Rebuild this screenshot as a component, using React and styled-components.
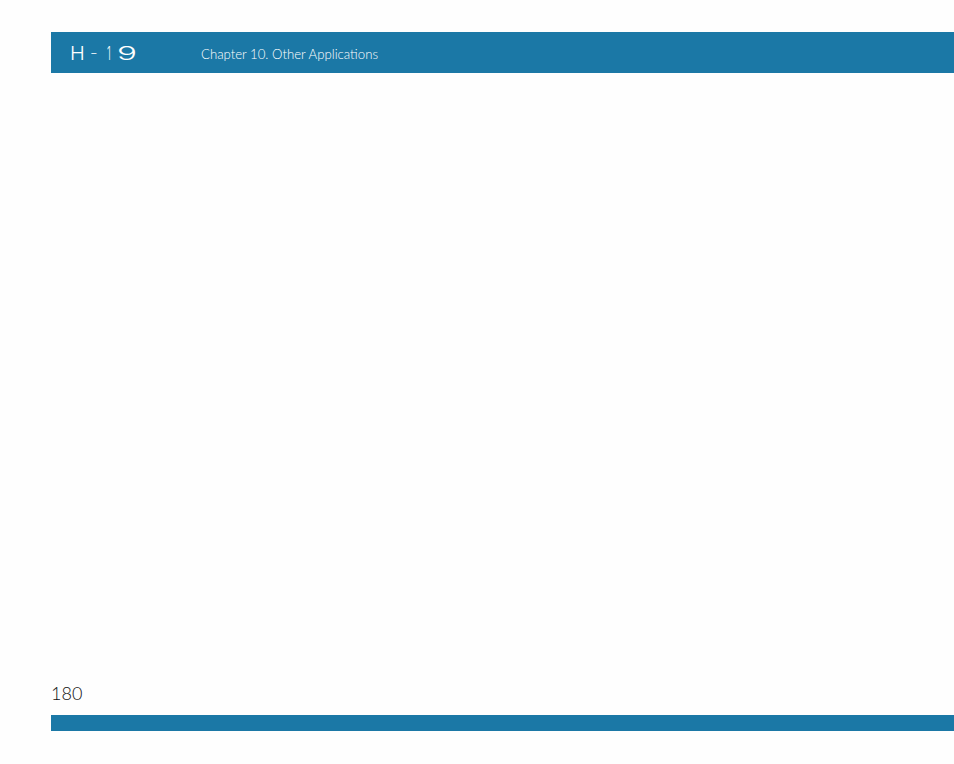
import React from 'react';
import styled, { createGlobalStyle } from 'styled-components';

const Global = createGlobalStyle`
  html, body { margin: 0; padding: 0; background: #fefefe; }
`;

const Sheet = styled.div`
  box-sizing: border-box;
  width: 954px;
  height: 764px;
  padding: 32px 0 33px 51px;
  display: flex;
  flex-direction: column;
  font-family: "Lato", "Liberation Sans", sans-serif;
  font-weight: 300;
  overflow: hidden;
`;

const Header = styled.header`
  height: 41px;
  background: #1b78a6;
  display: flex;
  align-items: center;
  color: #fff;
`;

const Model = styled.div`
  width: 150px;
  padding: 3px 0 0 19px;
  box-sizing: border-box;
  display: flex;
  align-items: center;
  font-family: "Inter", "Liberation Sans", sans-serif;
  font-weight: 300;
  font-size: 19px;
  line-height: 20px;
  white-space: nowrap;
`;

/* wide letterform of the logo: each glyph is stretched on its own */
const Glyph = styled.span`
  display: inline-block;
  width: ${p => p.$width}px;
  transform: translateY(${p => p.$lift || 0}px) scaleX(${p => p.$scale});
  transform-origin: 0 50%;
  font-size: ${p => p.$size || 19}px;
`;

const Chapter = styled.span`
  padding-top: 2px;
  font-size: 13.2px;
  color: #fff;
  white-space: nowrap;
`;

const Body = styled.main`
  flex: 1;
`;

const PageNumber = styled.div`
  font-size: 18px;
  line-height: 22px;
  color: #111;
  margin-bottom: 11px;
`;

const FooterBar = styled.footer`
  height: 16px;
  background: #1b78a6;
`;

export default function App() {
  return (
    <>
      <Global />
      <Sheet>
        <Header>
          <Model>
            <Glyph $width={20} $scale={1.05}>H</Glyph>
            <Glyph $width={17} $scale={1.4} $size={12} $lift={-1}>-</Glyph>
            <Glyph $width={10} $scale={0.5}>1</Glyph>
            <Glyph $width={20} $scale={1.75}>9</Glyph>
          </Model>
          <Chapter>Chapter 10. Other Applications</Chapter>
        </Header>
        <Body />
        <PageNumber>180</PageNumber>
        <FooterBar />
      </Sheet>
    </>
  );
}
